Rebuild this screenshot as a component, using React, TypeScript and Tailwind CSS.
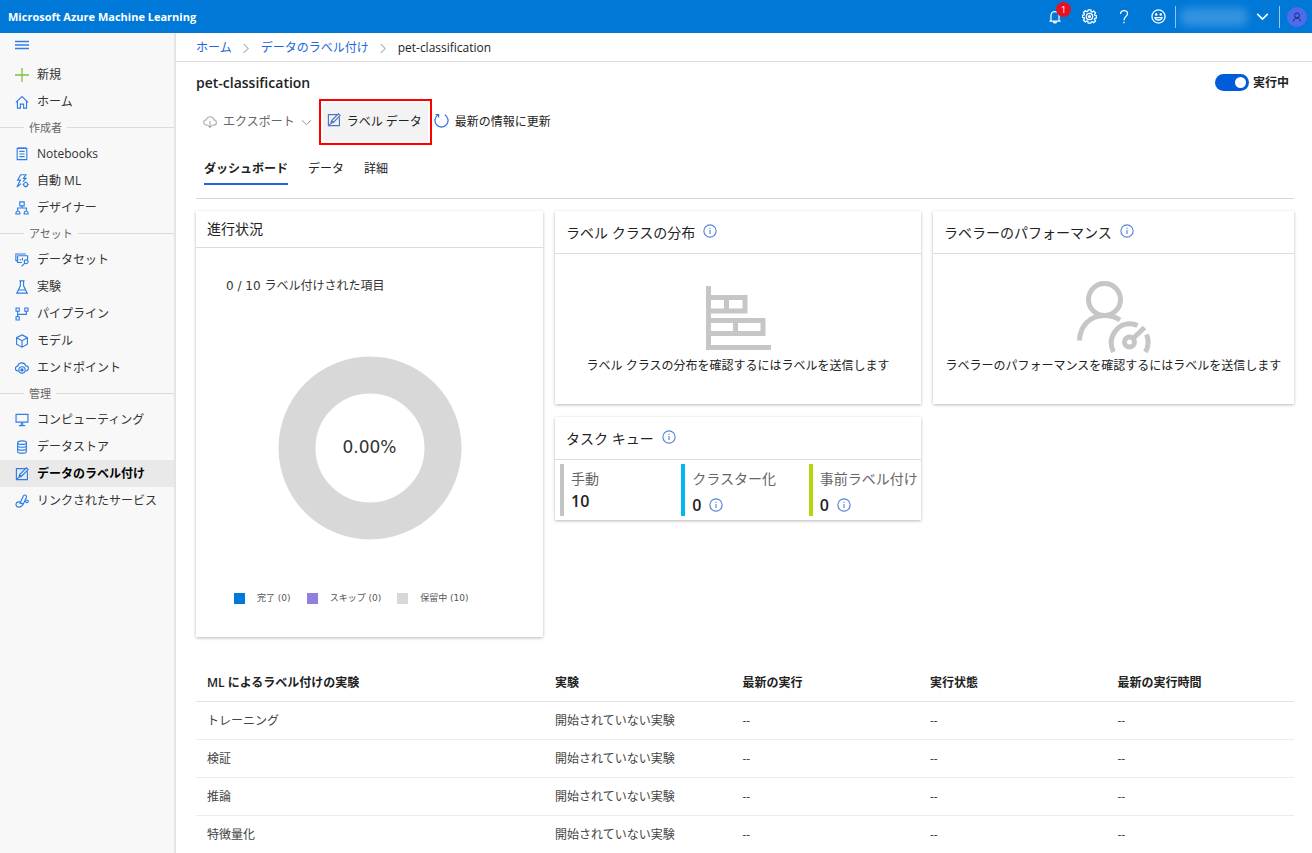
import React, { useState } from "react";
import clsx from "clsx";

type IconProps = { className?: string };

const Svg = ({
  className = "size-[14px]",
  viewBox = "0 0 16 16",
  strokeWidth = 1.3,
  children,
}: IconProps & {
  viewBox?: string;
  strokeWidth?: number;
  children: React.ReactNode;
}) => (
  <svg
    className={clsx("shrink-0", className)}
    viewBox={viewBox}
    fill="none"
    stroke="currentColor"
    strokeWidth={strokeWidth}
    aria-hidden="true"
  >
    {children}
  </svg>
);

const MenuIcon = () => (
  <Svg strokeWidth={1.6}>
    <path d="M0 4h16M0 8h16M0 12h16" />
  </Svg>
);

const PlusIcon = () => (
  <Svg className="size-[14px] text-[#7cc33f]" strokeWidth={1.5}>
    <path d="M8 0v16M0 8h16" />
  </Svg>
);

const HomeIcon = () => (
  <Svg>
    <path d="M1 8.5 8 1.8l7 6.7M2.8 7v8h3.4v-4.6h3.6V15h3.4V7" />
  </Svg>
);

const NotebookIcon = () => (
  <Svg>
    <path d="M2.5 1.5h11v13h-11zM5 5h6M5 8h6M5 11h6M4.5 0v2M7 0v2M9.3 0v2M11.6 0v2" />
  </Svg>
);

const AutoMlIcon = () => (
  <Svg>
    <path d="M6.5.8h6L9.6 5h3L9 8.8M6.5.8 3 7h3.2L2.2 14.8 7 11" />
    <circle cx="12.2" cy="12" r="2.3" />
    <path d="M12.2 8.5v1.2M12.2 14.3v1.2M8.8 12H10M14.4 12h1.2" />
  </Svg>
);

const DesignerIcon = () => (
  <Svg>
    <path d="M5.5 1h5v4.5h-5zM8 5.500V8M3 11V8h10v3" />
    <path d="M1 14.8c0-4.5 4.6-4.5 4.6 0zM10.4 14.8c0-4.5 4.6-4.5 4.6 0z" />
  </Svg>
);

const DatasetIcon = () => (
  <Svg>
    <path d="M1 9V1.2h11.5M3 3.2h11.4v4.5M3 3.2v7.6h5M6 8.6V6.8M8.4 8.6V5.4M1 9h2" />
    <circle cx="12.8" cy="10" r="2.2" />
    <path d="m11.2 11.6-3.6 3.6" />
  </Svg>
);

const FlaskIcon = () => (
  <Svg>
    <path d="M5 1h6M6.2 1v5.6L2 15h12L9.8 6.6V1M4 11.4h8" />
  </Svg>
);

const PipelineIcon = () => (
  <Svg>
    <path d="M1.2 1.2h3.6v3.6H1.2zM11.2 1.2h3.6v3.6h-3.6zM1.2 11.2h3.6v3.6H1.2zM3 4.8v6.4M3 8.4h10V4.8" />
  </Svg>
);

const ModelIcon = () => (
  <Svg>
    <path d="M8 1 14.2 4.2v7.4L8 15l-6.2-3.4V4.2zM1.8 4.2 8 7.6l6.2-3.4M8 7.6V15" />
  </Svg>
);

const EndpointIcon = () => (
  <Svg>
    <path d="M4 11.3H3.2a2.7 2.7 0 0 1 0-5.4c.5-2.4 2.4-3.8 4.6-3.8 2.3 0 3.9 1.3 4.5 3.4 1.7 0 3 1.3 3 2.9s-1.2 2.9-2.8 2.9" />
    <circle cx="8" cy="10.2" r="3.6" />
    <circle cx="8" cy="10.2" r="1.3" fill="currentColor" />
  </Svg>
);

const ComputeIcon = () => (
  <Svg>
    <path d="M1.2 1.5h13.6v9H1.2zM8 10.5v4M4.4 14.5h7.2M6.2 12.6h3.6" />
  </Svg>
);

const DatastoreIcon = () => (
  <Svg>
    <ellipse cx="8" cy="3" rx="5" ry="2" />
    <path d="M3 3v10c0 1.1 2.2 2 5 2s5-.9 5-2V3M3 6.3c0 1.1 2.2 2 5 2s5-.9 5-2M3 9.6c0 1.1 2.2 2 5 2s5-.9 5-2" />
  </Svg>
);

const LabelIcon = () => (
  <Svg>
    <path d="M12 1.8H1.6v12.6h12.6V4.8" />
    <path d="M4.4 11.8l.9-3.2L13 .9l2 2-7.7 7.9zM5.3 8.6l2 2.2M2.2 13.8l2.2-2" />
  </Svg>
);

const LinkedIcon = () => (
  <Svg>
    <path d="M9.4 10.6c-1.5 1-3.4-.2-2.7-2L9.6 2.3c1-2 4.2-1 3.4 1.4l-3.6 8.1c-1 2-2.7 3.2-4.8 3.2-4.4 0-4.5-5.2-1-6h2.2M5.4 11.4l2.3-5" />
    <circle cx="13.6" cy="8.4" r="1.6" />
  </Svg>
);

const InfoIcon = ({ className }: IconProps) => (
  <Svg className={clsx("size-[14px] text-[#5b82d6]", className)}>
    <circle cx="8" cy="8" r="7" />
    <path d="M8 6.8v4.6M8 4.3v1.4" />
  </Svg>
);

const ChevronDown = ({ className, strokeWidth = 1.3 }: IconProps & { strokeWidth?: number }) => (
  <Svg className={className} strokeWidth={strokeWidth}>
    <path d="m1.5 4.8 6.5 6.4 6.5-6.4" />
  </Svg>
);

const Crumb = () => (
  <Svg className="mx-[9px] size-[11px] text-[#aaa]" strokeWidth={1.5}>
    <path d="m4 1.5 6.5 6.5L4 14.5" />
  </Svg>
);

const navGroups = [
  {
    title: "",
    items: [
      { label: "新規", Icon: PlusIcon },
      { label: "ホーム", Icon: HomeIcon },
    ],
  },
  {
    title: "作成者",
    items: [
      { label: "Notebooks", Icon: NotebookIcon },
      { label: "自動 ML", Icon: AutoMlIcon },
      { label: "デザイナー", Icon: DesignerIcon },
    ],
  },
  {
    title: "アセット",
    items: [
      { label: "データセット", Icon: DatasetIcon },
      { label: "実験", Icon: FlaskIcon },
      { label: "パイプライン", Icon: PipelineIcon },
      { label: "モデル", Icon: ModelIcon },
      { label: "エンドポイント", Icon: EndpointIcon },
    ],
  },
  {
    title: "管理",
    items: [
      { label: "コンピューティング", Icon: ComputeIcon },
      { label: "データストア", Icon: DatastoreIcon },
      { label: "データのラベル付け", Icon: LabelIcon },
      { label: "リンクされたサービス", Icon: LinkedIcon },
    ],
  },
];

const legend = [
  { label: "完了 (0)", color: "bg-[#0078d7]" },
  { label: "スキップ (0)", color: "bg-[#9480dc]" },
  { label: "保留中 (10)", color: "bg-[#d8d8d8]" },
];

const queues = [
  { label: "手動", count: 10, color: "border-[#c4c4c4]", info: false },
  { label: "クラスター化", count: 0, color: "border-[#00b7f0]", info: true },
  { label: "事前ラベル付け", count: 0, color: "border-[#b4d60a]", info: true },
];

const columns = [
  "ML によるラベル付けの実験",
  "実験",
  "最新の実行",
  "実行状態",
  "最新の実行時間",
];

const rows = ["トレーニング", "検証", "推論", "特徴量化"];

const tabs = ["ダッシュボード", "データ", "詳細"];

const TopBar = () => (
  <header className="flex h-[33px] shrink-0 items-center bg-[#0078d7] pl-2 pr-[5px] text-white">
    <span className="grow text-[11px] font-bold leading-4">
      Microsoft Azure Machine Learning
    </span>
    <button className="relative mr-5" aria-label="通知">
      <Svg strokeWidth={1.4}>
        <path d="M1.6 12.8h12.8M3.4 12.8V6.4a4.6 4.6 0 0 1 9.2 0v6.4M6.2 13a1.8 1.8 0 0 0 3.6 0" />
      </Svg>
      <span className="absolute -top-2 left-2 flex size-[15px] items-center justify-center rounded-full bg-[#e81123] text-[9px] leading-none">
        1
      </span>
    </button>
    <button className="mr-5" aria-label="設定">
      <Svg className="size-[15px]" strokeWidth={1.4}>
        <path d="M6.6 1h2.8l.4 1.9 1 .4 1.7-1.1 1.9 1.9-1 1.7.4 1 1.9.4v2.2l-1.9.5-.4 1 1 1.7-1.9 1.9-1.7-1-1 .4L9.4 15H6.6l-.4-1.9-1-.4-1.7 1-1.9-1.9 1-1.7-.4-1L.5 9V6.8l1.7-.4.4-1-1-1.7 1.9-1.9 1.7 1.1 1-.4z" />
        <circle cx="8" cy="8" r="3.4" />
        <circle cx="8" cy="8" r="1" />
      </Svg>
    </button>
    <button className="mr-5" aria-label="ヘルプ">
      <Svg className="size-[14px]" strokeWidth={1.5}>
        <path d="M4 4.6C4 2.2 5.6.8 8 .8s4 1.4 4 3.5c0 3-4 3.1-4 7.300M8 13.400v1.800" />
      </Svg>
    </button>
    <button className="mr-[9px]" aria-label="フィードバック">
      <Svg className="size-[15px]" strokeWidth={1.4}>
        <circle cx="8" cy="8" r="7" />
        <path d="M4.2 9.200c.8 3.400 6.800 3.400 7.600 0z" />
        <circle cx="5.6" cy="5.800" r=".7" fill="currentColor" />
        <circle cx="10.4" cy="5.800" r=".7" fill="currentColor" />
      </Svg>
    </button>
    <div className="flex h-[22px] items-center border-x border-white/60 pl-1 pr-[10px]">
      <span className="mr-2 h-[18px] w-[68px] rounded-lg bg-[#3494e0] blur-[4px]" />
      <button className="flex" aria-label="アカウントの切り替え">
        <ChevronDown className="size-[13px]" strokeWidth={1.9} />
      </button>
    </div>
    <button
      className="ml-[7px] flex size-5 items-center justify-center rounded-full bg-[#4f6bed] text-[#1b2a66]"
      aria-label="アカウント"
    >
      <Svg className="size-[10px]" strokeWidth={1.6}>
        <circle cx="8" cy="5.500" r="4" />
        <path d="M2.500 15c0-7 11-7 11 0" />
      </Svg>
    </button>
  </header>
);

const Sidebar = () => (
  <nav className="w-44 shrink-0 border-r-2 border-[#e4e4e4] bg-[#f8f8f8] text-[12px] leading-4 text-[#333]">
    <button className="flex h-7 items-center px-[15px] pb-1 text-[#2f7de6]" aria-label="メニュー">
      <MenuIcon />
    </button>
    {navGroups.map((group) => (
      <div key={group.title}>
        {group.title && (
          <div className="flex h-[25px] items-center text-[11px] text-[#666]">
            <span className="w-6 border-t border-[#dcdcdc]" />
            <span className="px-[5px]">{group.title}</span>
            <span className="grow border-t border-[#dcdcdc]" />
          </div>
        )}
        {group.items.map(({ label, Icon }) => (
          <a
            key={label}
            href="#"
            className={clsx(
              "flex h-[27px] items-center gap-2 pl-[15px]",
              label === "データのラベル付け" && "bg-[#e9e9e9] font-semibold text-black"
            )}
          >
            <span className="flex text-[#2f7de6]">
              <Icon />
            </span>
            {label}
          </a>
        ))}
      </div>
    ))}
  </nav>
);

const Card = ({
  title,
  info,
  children,
}: {
  title: string;
  info?: boolean;
  children: React.ReactNode;
}) => (
  <section className="bg-white shadow-[0_1px_3px_rgba(0,0,0,0.28)]">
    <h2
      className={clsx(
        "flex items-center gap-2 border-b border-[#dcdcdc] px-[11px] text-[14px] leading-5 text-[#222]",
        info ? "h-[43px] pt-[2px]" : "h-[37px]"
      )}
    >
      {title}
      {info && <InfoIcon className="mb-1" />}
    </h2>
    {children}
  </section>
);

const ProgressCard = () => (
  <Card title="進行状況">
    <div className="flex h-[389px] flex-col font-['DejaVu_Sans','Noto_Sans_CJK_JP',sans-serif]">
      <p className="px-[30px] pt-[30px] text-[12px] leading-4 text-[#333]">
        0 / 10 ラベル付けされた項目
      </p>
      <div className="relative mx-auto mt-[62px] size-[184px]">
        <svg viewBox="0 0 184 184" fill="none" aria-hidden="true">
          <circle cx="92" cy="92" r="73" stroke="#d8d8d8" strokeWidth="37" />
        </svg>
        <span className="absolute inset-0 flex items-center justify-center text-[17px] text-[#333]">
          0.00%
        </span>
      </div>
      <ul className="mt-[50px] flex gap-4 pl-[38px] text-[9px] leading-4 text-[#555]">
        {legend.map((item) => (
          <li key={item.label} className="flex items-center gap-3">
            <span className={clsx("size-[11px]", item.color)} />
            {item.label}
          </li>
        ))}
      </ul>
    </div>
  </Card>
);

const BarsIcon = () => (
  <Svg className="h-16 w-[65px]" viewBox="0 0 65 64" strokeWidth={5}>
    <path d="M2.500 0v61.500H65M2.500 11.500H39v13.500H2.500M20.500 11.500V25M2.500 34.500H57v13H2.500M29.500 34.500v13" />
  </Svg>
);

const LabelerIcon = () => (
  <Svg className="h-[74px] w-[74px]" viewBox="0 0 74 74" strokeWidth={5}>
    <circle cx="27.500" cy="18.500" r="16" />
    <path d="M2.500 59.500C3 45 13 34.500 27.500 34.500c6 0 11 1.500 15.500 4.500" />
    <path d="M36.500 71c-7-14 4-30.500 19-28 2 .2 3.500.8 5 1.500M69.500 53.500c2.500 6 2 12-1 17.500" />
    <circle cx="52.500" cy="61" r="5" />
    <path d="M56 57.500 67.500 46.500" />
  </Svg>
);

const EmptyCard = ({
  title,
  message,
  Icon,
}: {
  title: string;
  message: string;
  Icon: () => React.ReactElement;
}) => (
  <Card title={title} info>
    <div className="flex h-[150px] flex-col items-center justify-end pb-[30px]">
      <span className="flex h-16 items-center text-[#c6c6c6]">
        <Icon />
      </span>
      <p className="mt-2 whitespace-nowrap text-[12px] leading-4 text-[#222]">{message}</p>
    </div>
  </Card>
);

const QueueCard = () => (
  <Card title="タスク キュー" info>
    <div className="grid grid-cols-[121fr_127fr_112fr] pb-1 pl-[5px] pt-1">
      {queues.map((queue) => (
        <div key={queue.label} className={clsx("h-[52px] border-l-4 pl-[7px]", queue.color)}>
          <div className="whitespace-nowrap pt-[5px] text-[14px] leading-5 text-[#666]">
            {queue.label}
          </div>
          <div
            className={clsx(
              "flex items-center gap-2 text-[16px] font-semibold leading-6 text-[#222]",
              queue.info && "pt-1"
            )}
          >
            {queue.count}
            {queue.info && <InfoIcon />}
          </div>
        </div>
      ))}
    </div>
  </Card>
);

const App = () => {
  const [running, setRunning] = useState(true);
  const [activeTab, setActiveTab] = useState(tabs[0]);

  return (
    <div
      lang="ja"
      className="flex min-h-screen flex-col bg-white font-['Open_Sans','Noto_Sans_CJK_JP',sans-serif] text-[#222]"
    >
      <TopBar />
      <div className="flex grow">
        <Sidebar />
        <main className="min-w-0 grow">
          <div className="flex h-[29px] items-center border-b border-[#dcdcdc] pl-5 pt-[2px] text-[12px] leading-4">
            <a href="#" className="text-[#2266d8]">
              ホーム
            </a>
            <Crumb />
            <a href="#" className="text-[#2266d8]">
              データのラベル付け
            </a>
            <Crumb />
            <span>pet-classification</span>
          </div>

          <div className="pl-5 pr-[18px]">
            <div className="flex h-[37px] items-center justify-between pr-[5px] pt-1">
              <h1 className="text-[14px] font-semibold leading-5">pet-classification</h1>
              <label className="flex items-center gap-1 text-[12px] font-semibold leading-4">
                <input
                  type="checkbox"
                  role="switch"
                  className="peer sr-only"
                  checked={running}
                  onChange={(e) => setRunning(e.target.checked)}
                />
                <span className="flex h-[17px] w-[34px] items-center rounded-full bg-[#888] px-[3px] peer-checked:justify-end peer-checked:bg-[#015cda]">
                  <span className="size-[11px] rounded-full bg-white" />
                </span>
                実行中
              </label>
            </div>

            <div className="flex items-center text-[12px] leading-4">
              <button className="flex items-center gap-[6px] px-[7px] text-[#666]">
                <Svg className="size-[14px] text-[#b0b0b0]">
                  <path d="M5.500 11.500H4a3 3 0 0 1-.300-6C4.200 3.300 6 2 8.200 2c2.300 0 3.900 1.400 4.300 3.500 1.600.1 2.800 1.300 2.800 3s-1.300 3-3 3h-1.800M8 6.500v7.500M5.800 12 8 14.200l2.200-2.200" />
                </Svg>
                エクスポート
                <ChevronDown className="size-[11px] text-[#888]" />
              </button>
              <button className="border-2 border-[#f00] p-[2px]">
                <span className="flex h-[38px] items-center gap-[6px] bg-[#f3f3f3] pl-1 pr-[6px]">
                  <span className="mb-1 flex text-[#4a74c8]">
                    <LabelIcon />
                  </span>
                  ラベル データ
                </span>
              </button>
              <button className="flex items-center gap-[6px] pl-[2px]">
                <Svg className="mb-1 size-[15px] text-[#2f6fe0]">
                  <path d="M11.500 1.900A7 7 0 1 1 4.500 1.900M1.600 1.600h3.300v3.300" />
                </Svg>
                最新の情報に更新
              </button>
            </div>

            <div
              role="tablist"
              className="mb-3 flex h-[54px] items-start gap-5 border-b border-[#d6d6d6] pl-2 pt-[14px] text-[12px] leading-4"
            >
              {tabs.map((tab) => (
                <button
                  key={tab}
                  role="tab"
                  aria-selected={tab === activeTab}
                  onClick={() => setActiveTab(tab)}
                  className={clsx(
                    "h-[26px] border-b-2 pb-1",
                    tab === activeTab ? "border-[#1f66dd] font-semibold" : "border-transparent"
                  )}
                >
                  {tab}
                </button>
              ))}
            </div>

            <div className="grid grid-cols-[347fr_366fr_361fr] items-start gap-3">
              <ProgressCard />
              <div className="flex flex-col gap-[13px]">
                <EmptyCard
                  title="ラベル クラスの分布"
                  message="ラベル クラスの分布を確認するにはラベルを送信します"
                  Icon={BarsIcon}
                />
                <QueueCard />
              </div>
              <EmptyCard
                title="ラベラーのパフォーマンス"
                message="ラベラーのパフォーマンスを確認するにはラベルを送信します"
                Icon={LabelerIcon}
              />
            </div>

            <table className="mt-[26px] w-full table-fixed text-left text-[12px] leading-4">
              <thead>
                <tr className="h-[38px] border-b border-[#e2e2e2]">
                  {columns.map((column, index) => (
                    <th
                      key={column}
                      scope="col"
                      className={clsx(
                        "pl-[11px] pt-[3px] font-semibold",
                        index === 0 && "w-[348px]"
                      )}
                    >
                      {column}
                    </th>
                  ))}
                </tr>
              </thead>
              <tbody className="text-[#444]">
                {rows.map((name) => (
                  <tr
                    key={name}
                    className="h-[38px] border-b border-[#ececec] [&>td]:pl-[11px] [&>td]:pt-[2px]"
                  >
                    <td>{name}</td>
                    <td>開始されていない実験</td>
                    <td>--</td>
                    <td>--</td>
                    <td>--</td>
                  </tr>
                ))}
              </tbody>
            </table>
          </div>
        </main>
      </div>
    </div>
  );
};

export default App;
